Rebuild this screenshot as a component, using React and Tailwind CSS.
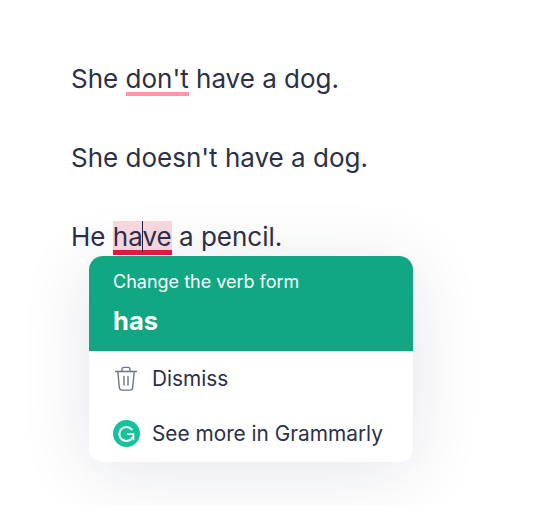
const FONT = "font-['Inter',sans-serif]";

const TrashIcon = () => (
  <svg width="24" height="26" viewBox="0 0 24 26" fill="none" stroke="#6d758d" strokeWidth="1.4" strokeLinecap="round" strokeLinejoin="round">
    <path d="M1.5 5.5h21" />
    <path d="M8 5.5V3.2C8 2 8.8 1.4 10 1.4h4c1.2 0 2 .6 2 1.8v2.3" />
    <path d="M3.8 5.5l1.5 15.7c.1 1.7 1.1 2.9 2.8 2.9h7.8c1.7 0 2.7-1.2 2.8-2.9l1.5-15.7" />
    <path d="M10 10.5v8.5M14 10.5v8.5" />
  </svg>
);

const GrammarlyIcon = () => (
  <svg width="27" height="27" viewBox="0 0 27 27" fill="none">
    <circle cx="13.5" cy="13.5" r="13.5" fill="#15c39a" />
    <path d="M18.6 9.4A7 7 0 1 0 19.4 17.4" stroke="#fff" strokeWidth="2.1" strokeLinecap="round" />
    <path d="M14.8 14h5.6v5.4" stroke="#fff" strokeWidth="1.9" strokeLinecap="round" strokeLinejoin="round" />
  </svg>
);

const App = () => {
  return (
    <div className={`relative w-[560px] h-[505px] bg-white overflow-hidden ${FONT} text-[#2c3048]`}>
      <div className="pl-[71px] pt-[60px] text-[26px] leading-[37px] flex flex-col gap-[42px]">
        <p>
          She{' '}
          <span className="relative">
            don't
            <span className="absolute left-0 right-0 top-[29px] h-[4px] bg-[#ff97a8]" />
          </span>{' '}
          have a dog.
        </p>
        <p>She doesn't have a dog.</p>
        <p>
          He{' '}
          <span className="relative">
            <span className="absolute left-0 right-0 top-0 h-[34px] bg-[#fbd9e0] border-b-[5px] border-[#e8193f]" />
            <span className="relative">have</span>
            <span className="absolute left-[29px] top-0 h-[31px] w-px bg-[#1d2340]" />
          </span>{' '}
          a pencil.
        </p>
      </div>

      {/* Suggestion card */}
      <div className="absolute left-[89px] top-[256px] w-[324px] h-[206px] rounded-[14px] bg-white overflow-hidden shadow-[0_10px_70px_rgba(42,50,90,0.12)]">
        <div className="h-[95px] bg-[#10a782] text-white pl-[24px] pt-[14px]">
          <div className="text-[18px] leading-[24px]">Change the verb form</div>
          <div className="text-[25.5px] leading-[32px] font-bold mt-[11px]">has</div>
        </div>
        <div className="flex items-center h-[55px] pl-[25px] gap-[14px] text-[20.8px] text-[#2c3048]">
          <TrashIcon />
          <span>Dismiss</span>
        </div>
        <div className="flex items-center h-[55px] pl-[24px] gap-[12px] text-[20.8px] text-[#2c3048]">
          <GrammarlyIcon />
          <span>See more in Grammarly</span>
        </div>
      </div>
    </div>
  );
};

export default App;
